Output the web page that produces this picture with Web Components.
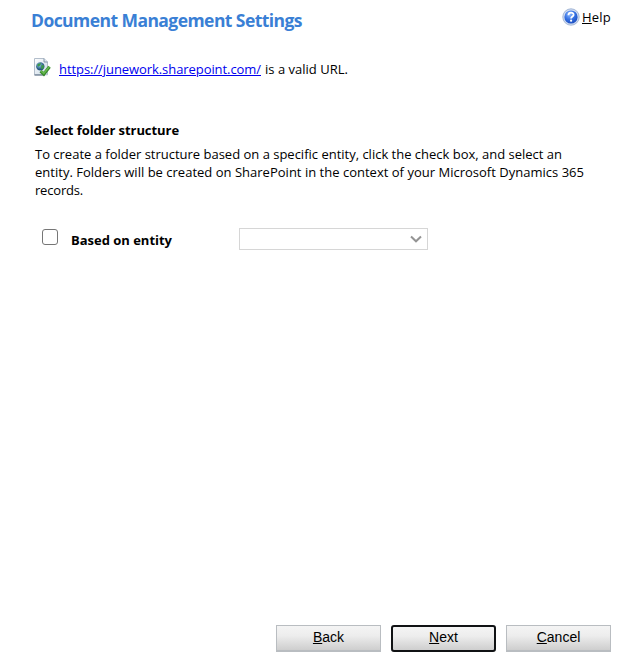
<!DOCTYPE html>
<html lang="en">
<head>
<meta charset="utf-8">
<title>Document Management Settings</title>
<style>
html,body{margin:0;height:100%;background:#fff;overflow:hidden}
</style>
</head>
<body>
<settings-page></settings-page>

<template id="page">
<style>
:host{display:flex;flex-direction:column;height:656px;box-sizing:border-box;width:633px;color:#000;font:13px/18px "Open Sans","Noto Sans",sans-serif}
header{display:flex;justify-content:space-between;align-items:flex-start;padding:8px 22px 0 31px;height:41px}
.title{font-size:17.5px;line-height:24px;font-weight:700;color:#3a7fd5}
.status{display:flex;gap:8px;padding:8px 0 0 33px;height:56px}
.status a{color:#00e;text-decoration:underline}
.msg{display:flex;gap:4px;padding-top:3px}
.intro{padding:0 0 0 35px;height:104px;margin-top:8px}
.intro b{display:block;margin-bottom:6px}
.row{display:flex;padding-left:42px;height:40px;padding-top:3px}
.row b{padding:3px 0 0 13px;width:181px;box-sizing:border-box}
footer{display:flex;gap:10px;margin-top:auto;padding:0 0 4px 276px}
</style>
<header><div class="title"><fit-line width="271">Document Management Settings</fit-line></div><help-link></help-link></header>
<div class="status"><valid-icon></valid-icon><div class="msg"><a><fit-line width="202">https://junework.sharepoint.com/</fit-line></a><fit-line width="83">is a valid URL.</fit-line></div></div>
<div class="intro"><b><fit-line width="144">Select folder structure</fit-line></b>
<fit-line width="527">To create a folder structure based on a specific entity, click the check box, and select an</fit-line>
<fit-line width="549">entity. Folders will be created on SharePoint in the context of your Microsoft Dynamics 365</fit-line>
<fit-line width="48">records.</fit-line></div>
<div class="row"><check-box></check-box><b><fit-line width="101">Based on entity</fit-line></b><entity-select></entity-select></div>
<footer><push-button key="B">ack</push-button><push-button key="N" primary>ext</push-button><push-button key="C">ancel</push-button></footer>
</template>

<script>
// Single text line whose tracking is adjusted so that it fills the given width.
customElements.define('fit-line', class extends HTMLElement {
  connectedCallback() {
    const root = this.attachShadow({mode: 'open'});
    root.innerHTML = '<style>:host{display:block;white-space:nowrap;text-decoration:inherit}span{display:inline-block;text-decoration:inherit}</style><span><slot></slot></span>';
    const span = root.querySelector('span');
    const natural = span.getBoundingClientRect().width;
    span.style.letterSpacing = (this.getAttribute('width') - natural) / this.textContent.length + 'px';
  }
});
const simple = (name, html) => customElements.define(name, class extends HTMLElement {
  constructor() { super(); this.attachShadow({mode: 'open'}).innerHTML = html; }
});
simple('help-link', `<style>:host{display:flex;gap:2px}div{display:flex;line-height:18px}u{text-underline-offset:1px}</style>
<svg width="18" height="18" viewBox="0 0 18 18"><defs><radialGradient id="g" cx=".4" cy=".3" r=".8"><stop stop-color="#8db9ff"/><stop offset=".5" stop-color="#3470e2"/><stop offset="1" stop-color="#1746b8"/></radialGradient></defs><circle cx="9" cy="9" r="8.2" fill="#d0dcf1" stroke="#9db1d3" stroke-width=".9"/><circle cx="9" cy="9" r="6.6" fill="url(#g)"/><path d="M6.4 7.2C6.5 3.9 11.7 4 11.6 6.9 11.4 8.6 9.1 8.6 9.1 10.5" fill="none" stroke="#fff" stroke-width="1.8"/><circle cx="9.1" cy="12.7" r="1.1" fill="#fff"/></svg>
<div><fit-line width="29"><u>H</u>elp</fit-line></div>`);
simple('valid-icon', `<style>:host{display:block;width:18px}svg{display:block}</style>
<svg width="18" height="20" viewBox="0 0 18 20"><defs><linearGradient id="p" x2="1" y2="1"><stop stop-color="#fff"/><stop offset="1" stop-color="#c9d8e6"/></linearGradient><radialGradient id="e" cx=".4" cy=".35"><stop stop-color="#8fc5e8"/><stop offset="1" stop-color="#24567f"/></radialGradient></defs>
<path d="M1.5 1.5H11L14.5 5V17.8H1.5Z" fill="url(#p)" stroke="#b3becb"/><path d="M1.5 18H12" stroke="#53667c"/><path d="M11 1.5V5H14.5" fill="#dce6ef" stroke="#7c8da0" stroke-width=".9"/>
<circle cx="7.3" cy="9.4" r="4.2" fill="url(#e)"/><path d="M4.1 8.1Q5.5 5.7 8.1 6.3L7.4 8.3 5.4 9.7ZM8.2 8.3L11 8.2 10.6 11.3 8.3 12.2Z" fill="#3d9a48"/>
<path d="M7.6 14.2L10.8 17.2 16.5 9.8" fill="none" stroke="#39892c" stroke-width="3.2"/><path d="M8 14L10.8 16.3 16.2 9.8" fill="none" stroke="#65b94d" stroke-width="1.6"/></svg>`);
simple('check-box', `<style>:host{display:block;box-sizing:border-box;width:16px;height:16px;margin-top:1px;border:1px solid #767676;border-radius:3px;background:#fff}</style>`);
simple('entity-select', `<style>:host{display:flex;justify-content:flex-end;align-items:center;box-sizing:border-box;width:189px;height:22px;padding-right:5px;border:1px solid #d6d6d6;background:#fff}</style>
<svg width="12" height="8" viewBox="0 0 12 8"><path d="M1 1.5L6 6.3 11 1.5" fill="none" stroke="#949494" stroke-width="2"/></svg>`);
customElements.define('push-button', class extends HTMLElement {
  constructor() {
    super();
    this.attachShadow({mode: 'open'}).innerHTML = `<style>:host{display:block;box-sizing:border-box;width:105px;height:27px;border:1px solid #b9bdc1;border-bottom-width:2px;background:linear-gradient(#f4f4f4,#ededed 40%,#cecece);font:14px/23px "Liberation Sans",Arial,sans-serif;text-align:center;color:#000}
:host([primary]){border:2px solid #101214;border-radius:3px;line-height:21px}u{text-underline-offset:1px;text-decoration-thickness:1px}</style><u>${this.getAttribute('key')}</u><slot></slot>`;
  }
});
customElements.define('settings-page', class extends HTMLElement {
  constructor() {
    super();
    this.attachShadow({mode: 'open'}).append(document.getElementById('page').content.cloneNode(true));
  }
});
</script>
</body>
</html>
